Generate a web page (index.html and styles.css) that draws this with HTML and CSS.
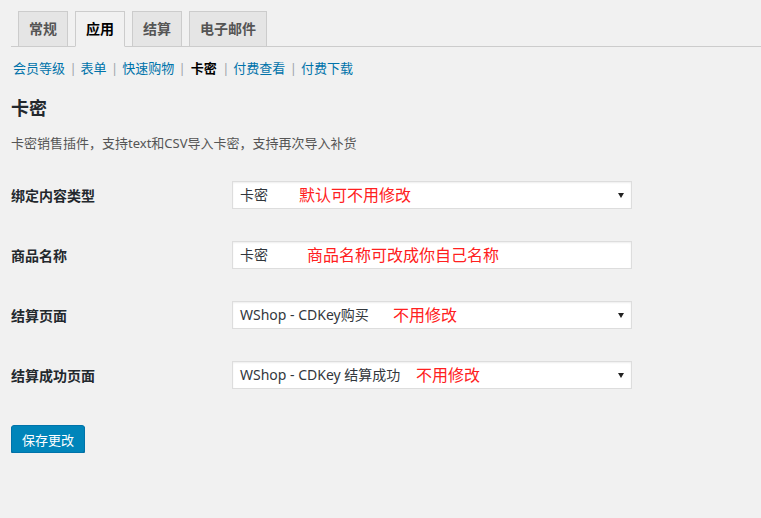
FILE: index.html
```html
<!DOCTYPE html>
<html lang="zh-CN">
<head>
<meta charset="UTF-8">
<title>卡密设置</title>
<link rel="stylesheet" href="styles.css">
</head>
<body>
<div class="wrap">
  <div class="tabs">
    <a class="tab" href="#">常规</a>
    <a class="tab active" href="#">应用</a>
    <a class="tab" href="#">结算</a>
    <a class="tab" href="#">电子邮件</a>
  </div>

  <ul class="subnav">
    <li><a href="#">会员等级</a> <span class="sep">|</span></li>
    <li><a href="#">表单</a> <span class="sep">|</span></li>
    <li><a href="#">快速购物</a> <span class="sep">|</span></li>
    <li><a class="current" href="#">卡密</a> <span class="sep">|</span></li>
    <li><a href="#">付费查看</a> <span class="sep">|</span></li>
    <li><a href="#">付费下载</a></li>
  </ul>

  <h2>卡密</h2>
  <p class="desc">卡密销售插件，支持text和CSV导入卡密，支持再次导入补货</p>

  <div class="form">
    <div class="row">
      <label>绑定内容类型</label>
      <div class="field select">
        <span>卡密</span>
        <span class="note" style="left: 66px">默认可不用修改</span>
      </div>
    </div>
    <div class="row">
      <label>商品名称</label>
      <div class="field">
        <span>卡密</span>
        <span class="note" style="left: 74px">商品名称可改成你自己名称</span>
      </div>
    </div>
    <div class="row">
      <label>结算页面</label>
      <div class="field select">
        <span>WShop - CDKey购买</span>
        <span class="note" style="left: 160px">不用修改</span>
      </div>
    </div>
    <div class="row">
      <label>结算成功页面</label>
      <div class="field select">
        <span>WShop - CDKey 结算成功</span>
        <span class="note" style="left: 183px">不用修改</span>
      </div>
    </div>
  </div>

  <button class="save">保存更改</button>
</div>
</body>
</html>
```

FILE: styles.css
```css
body {
  margin: 0;
  background: #f1f1f1;
  color: #444;
  font-family: "Noto Sans", "Noto Sans CJK SC", sans-serif;
  font-size: 13px;
}

.wrap {
  padding-left: 11px;
  padding-top: 11px;
}

.tabs {
  display: flex;
  padding-left: 7px;
  border-bottom: 1px solid #ccc;
}

.tab {
  display: block;
  margin-right: 7px;
  margin-bottom: -1px;
  padding: 5px 10px;
  line-height: 24px;
  font-size: 14px;
  font-weight: 600;
  color: #555;
  text-decoration: none;
  background: #e5e5e5;
  border: 1px solid #ccc;
}

.tab.active {
  background: #f1f1f1;
  color: #000;
  border-bottom-color: #f1f1f1;
}

.subnav {
  list-style: none;
  margin: 8px 0 0 2px;
  padding: 0;
  display: flex;
  line-height: 26px;
}

.subnav li {
  margin-right: 4px;
}

.subnav a {
  color: #0073aa;
  text-decoration: none;
}

.subnav a.current {
  color: #000;
  font-weight: 600;
  padding: 0 1px;
}

.subnav .sep {
  color: #a0a5aa;
  margin-left: 1px;
}

h2 {
  margin: 15px 0 0;
  font-size: 18px;
  line-height: 24px;
  font-weight: 600;
  color: #23282d;
}

.desc {
  margin: 13px 0 0;
  line-height: 20px;
  color: #555;
}

.form {
  margin-top: 12px;
}

.row {
  display: flex;
  align-items: center;
  height: 60px;
}

.row label {
  width: 221px;
  font-size: 14px;
  font-weight: 600;
  color: #23282d;
}

.field {
  position: relative;
  box-sizing: border-box;
  width: 400px;
  height: 28px;
  padding: 0 7px;
  line-height: 26px;
  background: #fff;
  border: 1px solid #ddd;
  box-shadow: inset 0 1px 2px rgba(0, 0, 0, 0.07);
  color: #32373c;
  font-size: 14px;
}

.select::after {
  content: "";
  position: absolute;
  right: 7px;
  top: 11px;
  border-left: 3px solid transparent;
  border-right: 3px solid transparent;
  border-top: 5px solid #222;
}

.note {
  position: absolute;
  top: 0;
  color: #ff2020;
  font-size: 16px;
  line-height: 26px;
}

.save {
  margin-top: 20px;
  height: 28px;
  padding: 0 10px;
  font-family: inherit;
  font-size: 13px;
  color: #fff;
  background: #0085ba;
  border: 1px solid #0073aa;
  border-radius: 3px;
  box-shadow: 0 1px 0 #006799;
  cursor: pointer;
}
```
